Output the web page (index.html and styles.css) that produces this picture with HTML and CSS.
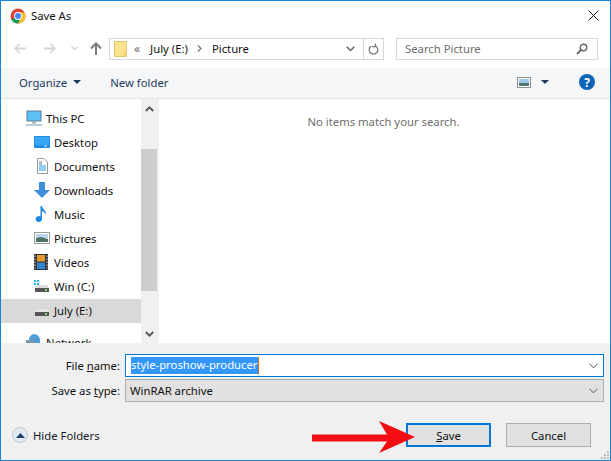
FILE: index.html
```html
<!DOCTYPE html>
<html lang="en">
<head>
<meta charset="utf-8">
<title>Save As</title>
<link rel="stylesheet" href="styles.css">
</head>
<body>
<div class="window">
  <header class="titlebar">
    <svg class="chrome" width="16" height="16" viewBox="0 0 16 16"><circle cx="8" cy="8" r="7.5" fill="#db4437"/><path d="M8 8 1.500 11.800A7.500 7.500 0 0 0 8 15.500l3.800-6.500z" fill="#0f9d58"/><path d="M8 4.500h6.800A7.500 7.500 0 0 1 8 15.500l3-6z" fill="#fbc02d"/><circle cx="8" cy="8" r="3.900" fill="#fff"/><circle cx="8" cy="8" r="3" fill="#4285f4"/></svg>
    <span class="title">Save As</span>
    <svg class="close" width="11" height="11" viewBox="0 0 11 11"><path d="M.5.500l10 10M10.500.500l-10 10" stroke="#111" stroke-width="1" fill="none"/></svg>
  </header>

  <nav class="navbar">
    <svg class="nav-ico back" width="12" height="11" viewBox="0 0 12 11"><path d="M5.500 1 1.200 5.500l4.300 4.500M2 5.500h10" stroke="#d5d5d5" stroke-width="1.800" fill="none"/></svg>
    <svg class="nav-ico fwd" width="12" height="11" viewBox="0 0 12 11"><path d="M6.500 1l4.300 4.500-4.300 4.500M10 5.500H0" stroke="#d5d5d5" stroke-width="1.800" fill="none"/></svg>
    <svg class="nav-ico drop" width="7" height="5" viewBox="0 0 7 5"><path d="M.5.500l3 3 3-3" stroke="#d5d5d5" stroke-width="1.300" fill="none"/></svg>
    <svg class="nav-ico up" width="12" height="13" viewBox="0 0 12 13"><path d="M1 6.500 6 1.500l5 5M6 2v11" stroke="#7a7a7a" stroke-width="2" fill="none"/></svg>
    <div class="address">
      <svg class="addr-folder" width="13" height="16" viewBox="0 0 13 16"><path d="M.5.500h12v15H.5z" fill="#fbe38e" stroke="#e3c66b"/><path d="M10 10.500h2.500v5H10z" fill="#f4d26a"/></svg>
      <span class="crumb-more">&laquo;</span>
      <span class="crumb">July (E:)</span>
      <svg class="crumb-sep" width="5" height="7" viewBox="0 0 5 7"><path d="M1 .500l3 3-3 3" stroke="#777" stroke-width="1.200" fill="none"/></svg>
      <span class="crumb">Picture</span>
      <svg class="addr-chevron" width="9" height="6" viewBox="0 0 9 6"><path d="M.7.700l3.800 3.800L8.300.700" stroke="#666" stroke-width="1.500" fill="none"/></svg>
      <span class="refresh">
        <svg width="11" height="12" viewBox="0 0 11 12"><path d="M3 2.800a4.300 4.300 0 1 0 4.500-.300M7.500 0v3.200H4" stroke="#777" stroke-width="1.300" fill="none" transform="translate(0 .5)"/></svg>
      </span>
    </div>
    <div class="search">
      <span>Search Picture</span>
      <svg width="12" height="12" viewBox="0 0 12 12"><circle cx="7.500" cy="4.500" r="3.300" stroke="#666" stroke-width="1.400" fill="none"/><path d="M5 7l-4 4" stroke="#666" stroke-width="1.800"/></svg>
    </div>
  </nav>

  <div class="toolbar">
    <span class="tool">Organize</span>
    <span class="caret organize-caret"></span>
    <span class="tool new-folder">New folder</span>
    <svg class="view" width="14" height="11" viewBox="0 0 14 11"><rect x=".5" y=".5" width="13" height="10" fill="#fff" stroke="#8c8c8c"/><rect x="2" y="2" width="10" height="4" fill="#9cc9e8"/><rect x="2" y="6" width="10" height="3" fill="#4d7a6a"/></svg>
    <span class="caret view-caret"></span>
    <span class="help">?</span>
  </div>

  <main class="content">
    <aside class="sidebar">
      <div class="tree">
        <div class="row top">
          <svg width="16" height="16" viewBox="0 0 16 16"><rect x="1" y="1" width="14" height="10" fill="#5cc0f4" stroke="#5c7f94"/><path d="M6 11.500h4v2H6z" fill="#9db2bf"/><path d="M0 15h16" stroke="#a9bac4" stroke-width="1.500"/></svg>
          <span>This PC</span>
        </div>
        <div class="row">
          <svg width="16" height="12" viewBox="0 0 16 12"><rect width="16" height="12" rx="1" fill="#1e8fe8"/><path d="M1 1h14v8H1z" fill="#3aa5f3"/><path d="M10 10h3" stroke="#dff"/></svg>
          <span>Desktop</span>
        </div>
        <div class="row">
          <svg width="16" height="16" viewBox="0 0 16 16"><path d="M3.500.500H10L13.500 4v11.500h-10z" fill="#fff" stroke="#9a9a9a"/><path d="M5 4h3M5 6h3" stroke="#5a7a90"/><path d="M5 8h7M5 10h7M5 12h7" stroke="#2f9be0"/></svg>
          <span>Documents</span>
        </div>
        <div class="row">
          <svg width="16" height="16" viewBox="0 0 16 16"><path d="M5 0h6v8h5l-8 8-8-8h5z" fill="#3d8fdc"/></svg>
          <span>Downloads</span>
        </div>
        <div class="row">
          <svg width="16" height="16" viewBox="0 0 16 16"><path d="M6.500 0H8c.3 3.500 4.500 4 3.800 8.500C11 6.500 9.500 5.500 8 5.300V13a3.200 3 0 1 1-1.500-2.500z" fill="#1e88e5"/></svg>
          <span>Music</span>
        </div>
        <div class="row">
          <svg width="16" height="12" viewBox="0 0 16 12"><rect x=".5" y=".5" width="15" height="11" fill="#fff" stroke="#999"/><rect x="2" y="2" width="12" height="4" fill="#b9d6e8"/><path d="M2 6l5-1 7 2v3H2z" fill="#4b7464"/></svg>
          <span>Pictures</span>
        </div>
        <div class="row">
          <svg width="14" height="16" viewBox="0 0 14 16"><rect width="14" height="16" fill="#333"/><rect x="3" y="1" width="8" height="6.500" fill="#e39a35"/><rect x="3" y="8.500" width="8" height="6.500" fill="#2f86d0"/><path d="M1 1.500v13M13 1.500v13" stroke="#ddd" stroke-dasharray="1.500 1.500"/></svg>
          <span>Videos</span>
        </div>
        <div class="row">
          <svg class="drive" width="16" height="16" viewBox="0 0 16 16"><path d="M0 2h2v2H0zM3 2h2v2H3zM0 5h2v2H0zM3 5h2v2H3z" fill="#26b4f0"/><path d="M3 7h10l2 3H1z" fill="#dcdcdc"/><rect x="1" y="10" width="14" height="4" fill="#555"/><rect x="11" y="11" width="2" height="2" fill="#5fe05f"/></svg>
          <span>Win (C:)</span>
        </div>
        <div class="row selected">
          <svg class="drive" width="16" height="16" viewBox="0 0 16 16"><path d="M3 7h10l2 3H1z" fill="#e4e4e4"/><rect x="1" y="10" width="14" height="4" fill="#555"/><rect x="11" y="11" width="2" height="2" fill="#5fe05f"/></svg>
          <span>July (E:)</span>
        </div>
        <div class="row top network">
          <svg width="16" height="16" viewBox="0 0 16 16"><path d="M8 0a6 6 0 0 1 6 6v3H3V6a6 6 0 0 1 5-6z" fill="#4f9ed8"/><rect x="0" y="6" width="8" height="6" fill="#7d96a8"/></svg>
          <span>Network</span>
        </div>
      </div>
      <div class="scrollbar">
        <svg width="9" height="6" viewBox="0 0 9 6"><path d="M.8 5 4.500 1.300 8.200 5" stroke="#555" stroke-width="1.800" fill="none"/></svg>
        <div class="track"><div class="thumb"></div></div>
        <svg width="9" height="6" viewBox="0 0 9 6"><path d="M.8 1l3.700 3.700L8.200 1" stroke="#555" stroke-width="1.800" fill="none"/></svg>
      </div>
    </aside>
    <section class="results">No items match your search.</section>
  </main>

  <form class="footer">
    <div class="field">
      <label>File <u>n</u>ame:</label>
      <div class="input focused"><span class="sel">style-proshow-producer</span><svg width="9" height="6" viewBox="0 0 9 6"><path d="M.5.800l4 4 4-4" stroke="#555" stroke-width="1" fill="none"/></svg></div>
    </div>
    <div class="field second">
      <label>Save as <u>t</u>ype:</label>
      <div class="input combo"><span>WinRAR archive</span><svg width="9" height="6" viewBox="0 0 9 6"><path d="M.5.800l4 4 4-4" stroke="#555" stroke-width="1" fill="none"/></svg></div>
    </div>
    <div class="actions">
      <span class="hide">
        <span class="hide-ico"><svg width="9" height="5" viewBox="0 0 9 5"><path d="M4.500 0 9 5H0z" fill="#1d3f6e"/></svg></span>
        Hide Folders
      </span>
      <span class="btn primary"><span><u>S</u>ave</span></span>
      <span class="btn cancel">Cancel</span>
    </div>
    <svg class="grip" width="9" height="9" viewBox="0 0 9 9"><path d="M7 1h2v2H7zM4 4h2v2H4zM7 4h2v2H7zM1 7h2v2H1zM4 7h2v2H4zM7 7h2v2H7z" fill="#bdbdbd"/></svg>
  </form>

  <svg class="arrow" width="105" height="32" viewBox="0 0 105 32"><path d="M0 13.500h75L67 0l36 16-36 16 8-11.500H0z" fill="#f30d12"/></svg>
</div>
</body>
</html>
```

FILE: styles.css
```css
* { box-sizing: border-box; }
html, body { margin: 0; padding: 0; }
body { width: 611px; height: 461px; overflow: hidden; background: #fff; font-family: "Noto Sans", "Open Sans", sans-serif; font-size: 11.3px; color: #111; }
.window { position: relative; width: 611px; height: 461px; border: 1px solid #1883d7; display: flex; flex-direction: column; background: #fff; }
.titlebar { height: 29px; display: flex; align-items: center; padding: 0 0 0 9px; flex: none; }
.title { margin-left: 5px; }
.close { margin-left: auto; margin-right: 11px; }
.navbar { height: 38px; flex: none; display: flex; align-items: center; padding: 0 12px 1px 0; }
.nav-ico { flex: none; }
.back { margin-left: 13px; }
.fwd { margin-left: 18px; }
.drop { margin-left: 15px; }
.up { margin-left: 12px; }
.address { margin-left: 7px; width: 275px; height: 22px; border: 1px solid #d9d9d9; display: flex; align-items: center; padding-left: 4px; }
.addr-folder { flex: none; }
.crumb-more { margin-left: 7px; color: #666; font-size: 12px; }
.crumb { margin-left: 10px; }
.crumb-sep { margin-left: 9px; }
.crumb-sep + .crumb { margin-left: 10px; }
.addr-chevron { margin-left: auto; margin-right: 8px; }
.refresh { width: 20px; height: 20px; border-left: 1px solid #d9d9d9; display: flex; align-items: center; justify-content: center; }
.search { margin-left: 12px; width: 202px; height: 22px; border: 1px solid #d9d9d9; display: flex; align-items: center; justify-content: space-between; padding: 0 9px 0 8px; color: #6d6d6d; }
.toolbar { height: 31px; flex: none; background: #f5f6f7; border-bottom: 1px solid #e5e5e5; display: flex; align-items: center; padding: 0 0 2px 18px; }
.tool { color: #1e3a5f; }
.caret { width: 0; height: 0; border-left: 4px solid transparent; border-right: 4px solid transparent; border-top: 4px solid #1e3a5f; }
.organize-caret { margin-left: 6px; }
.new-folder { margin-left: 29px; }
.view { margin-left: auto; }
.view-caret { margin-left: 10px; }
.help { margin-left: 30px; margin-right: 15px; width: 16px; height: 16px; border-radius: 50%; background: #0f63b8; color: #fff; font-weight: 700; font-size: 12px; display: flex; align-items: center; justify-content: center; }
.content { height: 244px; flex: none; display: flex; overflow: hidden; }
.sidebar { width: 158px; flex: none; display: flex; border-right: 2px solid #f0f0f0; }
.tree { width: 140px; flex: none; padding-top: 8px; }
.row { height: 24px; display: flex; align-items: center; padding-left: 32px; padding-bottom: 2px; flex: none; position: relative; }
.row svg { position: absolute; left: 33px; top: 50%; transform: translateY(calc(-50% - 1px)); }
.row span { margin-left: 21px; }
.top { padding-left: 24px; }
.top svg { left: 25px; }
.selected { background: #d9d9d9; }
.network { margin-top: 8px; }
.scrollbar { width: 16px; flex: none; background: #f0f0f0; display: flex; flex-direction: column; align-items: center; justify-content: space-between; padding: 7px 0 6px; }
.track { flex: 1; width: 16px; padding-top: 37px; padding-bottom: 36px; display: flex; margin: 0; }
.thumb { width: 16px; height: 142px; background: #cdcdcd; }
.results { flex: 1; text-align: center; padding-top: 15px; padding-right: 2px; color: #6d6d6d; }
.footer { position: relative; flex: 1; background: #f0f0f0; display: flex; flex-direction: column; padding: 11px 6px 0 0; }
.field { display: flex; align-items: center; height: 23px; }
.second { margin-top: 2px; }
.field label { width: 124px; text-align: right; padding-right: 5px; flex: none; }
.input { flex: 1; height: 23px; display: flex; align-items: center; justify-content: space-between; padding: 0 5px 0 5px; border: 1px solid #0078d7; background: #fff; }
.sel { background: #3297fd; color: #fff; height: 17px; line-height: 16px; border-right: 1px solid #d66a10; }
.combo { border-color: #adadad; background: #e1e1e1; padding-left: 4px; }
.actions { display: flex; align-items: center; margin-top: 21px; height: 24px; padding-left: 11px; }
.hide { display: flex; align-items: center; color: #1a1a2a; }
.hide-ico { width: 16px; height: 16px; border-radius: 50%; border: 1px solid #c0c8d4; background: #e4eaf2; display: flex; align-items: center; justify-content: center; margin-right: 5px; }
.btn { width: 85px; height: 24px; background: #e1e1e1; border: 1px solid #adadad; display: flex; align-items: center; justify-content: center; }
.primary { margin-left: auto; border: 2px solid #0078d7; }
.cancel { margin-left: 15px; margin-right: 13px; }
.grip { position: absolute; right: 1px; bottom: 1px; }
.arrow { position: absolute; left: 311px; top: 420px; }
```
